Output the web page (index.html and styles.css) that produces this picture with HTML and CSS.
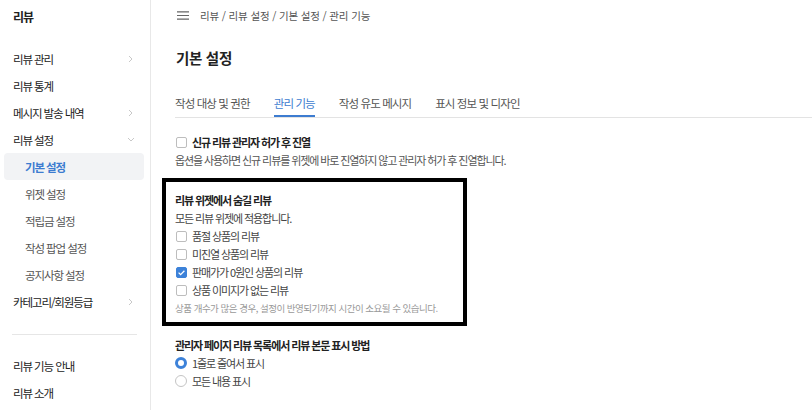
FILE: index.html
```html
<!DOCTYPE html>
<html lang="ko">
<head>
<meta charset="utf-8">
<title>리뷰 - 기본 설정</title>
<link rel="stylesheet" href="styles.css">
</head>
<body>
<div class="app">
  <aside class="sidebar">
    <div class="side-title">리뷰</div>
    <div class="nav-item"><span>리뷰 관리</span><svg class="chev" width="5" height="8" viewBox="0 0 5 8"><path d="M1 1l3 3-3 3" fill="none" stroke="#c2c2c2" stroke-width="0.9"/></svg></div>
    <div class="nav-item"><span>리뷰 통계</span></div>
    <div class="nav-item"><span>메시지 발송 내역</span><svg class="chev" width="5" height="8" viewBox="0 0 5 8"><path d="M1 1l3 3-3 3" fill="none" stroke="#c2c2c2" stroke-width="0.9"/></svg></div>
    <div class="nav-item"><span>리뷰 설정</span><svg class="chev-down" width="8" height="5" viewBox="0 0 8 5"><path d="M1 1l3 3 3-3" fill="none" stroke="#c2c2c2" stroke-width="0.9"/></svg></div>
    <div class="nav-item nav-sub active"><span>기본 설정</span></div>
    <div class="nav-item nav-sub"><span>위젯 설정</span></div>
    <div class="nav-item nav-sub"><span>적립금 설정</span></div>
    <div class="nav-item nav-sub"><span>작성 팝업 설정</span></div>
    <div class="nav-item nav-sub"><span>공지사항 설정</span></div>
    <div class="nav-item"><span>카테고리/회원등급</span><svg class="chev" width="5" height="8" viewBox="0 0 5 8"><path d="M1 1l3 3-3 3" fill="none" stroke="#c2c2c2" stroke-width="0.9"/></svg></div>
    <div class="divider"></div>
    <div class="nav-item"><span>리뷰 기능 안내</span></div>
    <div class="nav-item"><span>리뷰 소개</span></div>
  </aside>
  <main class="main">
    <div class="topbar">
      <svg class="menu-icon" width="12" height="9" viewBox="0 0 12 9"><path d="M0 0.8h12M0 4.5h12M0 8.2h12" stroke="#666" stroke-width="1.2"/></svg>
      <div class="breadcrumb">리뷰 / 리뷰 설정 / 기본 설정 / 관리 기능</div>
    </div>
    <h1 class="page-title">기본 설정</h1>
    <nav class="tabs">
      <div class="tab">작성 대상 및 권한</div>
      <div class="tab active">관리 기능</div>
      <div class="tab">작성 유도 메시지</div>
      <div class="tab">표시 정보 및 디자인</div>
    </nav>
    <div class="check-row opt-first"><span class="checkbox"></span><span class="strong">신규 리뷰 관리자 허가 후 진열</span></div>
    <p class="desc">옵션을 사용하면 신규 리뷰를 위젯에 바로 진열하지 않고 관리자 허가 후 진열합니다.</p>
    <section class="hide-box">
      <div class="line strong">리뷰 위젯에서 숨길 리뷰</div>
      <div class="line text">모든 리뷰 위젯에 적용합니다.</div>
      <div class="check-row"><span class="checkbox"></span><span>품절 상품의 리뷰</span></div>
      <div class="check-row"><span class="checkbox"></span><span>미진열 상품의 리뷰</span></div>
      <div class="check-row"><span class="checkbox checked"><svg width="9" height="9" viewBox="0 0 9 9"><path d="M1.6 4.6l2 2 3.8-3.8" fill="none" stroke="#fff" stroke-width="1.3"/></svg></span><span>판매가가 0원인 상품의 리뷰</span></div>
      <div class="check-row"><span class="checkbox"></span><span>상품 이미지가 없는 리뷰</span></div>
      <div class="line note">상품 개수가 많은 경우, 설정이 반영되기까지 시간이 소요될 수 있습니다.</div>
    </section>
    <div class="sec-title strong">관리자 페이지 리뷰 목록에서 리뷰 본문 표시 방법</div>
    <div class="check-row"><span class="radio on"></span><span>1줄로 줄여서 표시</span></div>
    <div class="check-row"><span class="radio"></span><span>모든 내용 표시</span></div>
  </main>
</div>
</body>
</html>
```
FILE: styles.css
```css
* { box-sizing: border-box; margin: 0; padding: 0; }
body {
  font-family: "Noto Sans CJK KR", "Noto Sans", sans-serif;
  color: #222;
  background: #fff;
  width: 812px;
  height: 410px;
  overflow: hidden;
}
.app { display: flex; height: 410px; }

/* sidebar */
.sidebar {
  width: 151px;
  flex: none;
  border-right: 1px solid #e8e8e8;
}
.side-title {
  height: 34px;
  line-height: 34px;
  padding-left: 13px;
  font-size: 12px;
  font-weight: 700;
  letter-spacing: -1px;
  margin-bottom: 11px;
}
.nav-item {
  height: 27px;
  display: flex;
  align-items: center;
  justify-content: space-between;
  padding: 0 17px 0 13px;
  font-size: 11.5px;
  letter-spacing: -1.1px;
  color: #222;
}
.chev-down { margin-right: -2px; }
.nav-sub {
  margin: 0 6px 0 4px;
  padding-left: 21px;
  color: #555;
}
.nav-sub.active {
  background: #f2f3f5;
  border-radius: 4px;
  color: #3d7cd0;
  font-weight: 700;
}
.divider {
  height: 1px;
  background: #e6e6e6;
  margin: 19px 13px 17px 12px;
}

/* main */
.main { flex: 1; min-width: 0; padding-left: 24px; }
.topbar {
  height: 30px;
  display: flex;
  align-items: center;
  gap: 11px;
  padding-left: 2px;
}
.menu-icon { flex: none; }
.breadcrumb {
  font-size: 10.5px;
  color: #555;
  letter-spacing: -0.15px;
}
.page-title {
  margin-top: 18px;
  height: 20px;
  line-height: 20px;
  font-size: 14.5px;
  font-weight: 700;
  letter-spacing: -0.3px;
  padding-left: 1px;
}
.tabs {
  margin-top: 24px;
  display: flex;
  gap: 24px;
  border-bottom: 1px solid #e3e3e3;
}
.tab {
  line-height: 22px;
  padding-bottom: 1px;
  border-bottom: 2px solid transparent;
  font-size: 11.5px;
  letter-spacing: -0.9px;
  color: #555;
}
.tab.active { color: #3d7cd0; border-bottom-color: #3d7cd0; }

.check-row {
  display: flex;
  align-items: center;
  height: 18px;
  font-size: 11px;
  letter-spacing: -1.1px;
  color: #444;
}
.opt-first { margin-top: 16px; height: 16px; }
.strong { font-weight: 700; color: #222; }
.checkbox {
  width: 11px;
  height: 11px;
  flex: none;
  border: 1px solid #bdbdbd;
  border-radius: 2px;
  margin: 0 5px 0 1px;
  background: #fff;
  display: flex;
  align-items: center;
  justify-content: center;
}
.checkbox.checked { background: #3d82d9; border-color: #3d82d9; }
.desc {
  margin-top: 1px;
  line-height: 18px;
  font-size: 11px;
  letter-spacing: -1.1px;
  color: #555;
}
.hide-box {
  margin: 9px 0 0 -13px;
  width: 305px;
  border: 4px solid #000;
  padding: 9px 0 5px 9px;
}
.line {
  line-height: 18px;
  font-size: 11px;
  letter-spacing: -1.1px;
}
.line.text { color: #444; }
.line.note {
  font-size: 9.5px;
  letter-spacing: -0.5px;
  color: #999;
}
.sec-title {
  margin-top: 10px;
  line-height: 18px;
  font-size: 11px;
  letter-spacing: -1.1px;
}
.radio {
  width: 12px;
  height: 12px;
  flex: none;
  border: 1px solid #c4c4c4;
  border-radius: 50%;
  margin-right: 5px;
  background: #fff;
}
.radio.on { border: 3.5px solid #3d82d9; }
```
